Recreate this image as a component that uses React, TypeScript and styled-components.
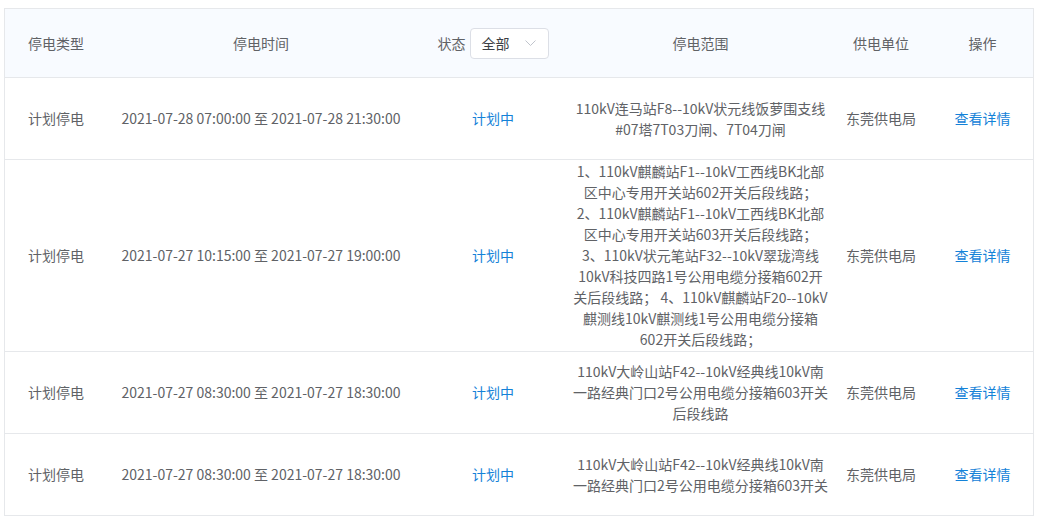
import React from "react";
import styled, { createGlobalStyle } from "styled-components";

const GlobalStyle = createGlobalStyle`
  html, body { margin: 0; padding: 0; background: #fff; }
  body {
    padding: 8px 7px 0 4px;
    font-family: "Noto Sans CJK SC", "Microsoft YaHei", sans-serif;
    font-size: 14px;
    color: #606266;
    overflow: hidden;
  }
`;

const COLS = "102px 308px 156px 259px 102px 101px";

const Table = styled.div`
  width: 1030px;
  border: 1px solid #e6e8eb;
  border-bottom: none;
  box-sizing: border-box;
`;

const HeaderRow = styled.div`
  display: grid;
  grid-template-columns: ${COLS};
  height: 69px;
  background: #f8fbff;
  border-bottom: 1px solid #e6e8eb;
  box-sizing: border-box;
`;

const Row = styled.div`
  display: grid;
  grid-template-columns: ${COLS};
  min-height: 82px;
  border-bottom: 1px solid #e6e8eb;
  box-sizing: border-box;
`;

const Cell = styled.div<{ $blue?: boolean }>`
  display: flex;
  align-items: center;
  justify-content: center;
  text-align: center;
  line-height: 21px;
  padding: 1px 0;
  color: ${(p) => (p.$blue ? "#1482d8" : "#606266")};
  white-space: nowrap;
`;

const RangeCell = styled(Cell)`
  white-space: pre-line;
  word-break: normal;
  padding: 1px 1.5px;
`;

const Link = styled.a`
  color: #1482d8;
  text-decoration: none;
  cursor: pointer;
`;

const StatusHead = styled.div`
  display: flex;
  align-items: center;
  gap: 4px;
`;

const Select = styled.div`
  width: 79px;
  height: 31px;
  box-sizing: border-box;
  border: 1px solid #dcdfe6;
  border-radius: 4px;
  background: #fff;
  display: flex;
  align-items: center;
  justify-content: space-between;
  padding: 0 12px 0 11px;
  color: #3c3f45;
`;

const Chevron = () => (
  <svg width="11" height="7" viewBox="0 0 11 7" fill="none">
    <polyline points="0.5,0.5 5.5,5.5 10.5,0.5" stroke="#c0c4cc" strokeWidth="1" />
  </svg>
);

type Item = {
  type: string;
  time: string;
  status: string;
  range: string;
  unit: string;
};

const data: Item[] = [
  {
    type: "计划停电",
    time: "2021-07-28 07:00:00 至 2021-07-28 21:30:00",
    status: "计划中",
    range: "110kV连马站F8--10kV状元线饭萝围支线#07塔7T03刀闸、7T04刀闸",
    unit: "东莞供电局",
  },
  {
    type: "计划停电",
    time: "2021-07-27 10:15:00 至 2021-07-27 19:00:00",
    status: "计划中",
    range:
      "1、110kV麒麟站F1--10kV工西线BK北部区中心专用开关站602开关后段线路；\n2、110kV麒麟站F1--10kV工西线BK北部区中心专用开关站603开关后段线路；\n3、110kV状元笔站F32--10kV翠珑湾线10kV科技四路1号公用电缆分接箱602开关后段线路； 4、110kV麒麟站F20--10kV麒测线10kV麒测线1号公用电缆分接箱602开关后段线路；",
    unit: "东莞供电局",
  },
  {
    type: "计划停电",
    time: "2021-07-27 08:30:00 至 2021-07-27 18:30:00",
    status: "计划中",
    range: "110kV大岭山站F42--10kV经典线10kV南一路经典门口2号公用电缆分接箱603开关后段线路",
    unit: "东莞供电局",
  },
  {
    type: "计划停电",
    time: "2021-07-27 08:30:00 至 2021-07-27 18:30:00",
    status: "计划中",
    range: "110kV大岭山站F42--10kV经典线10kV南一路经典门口2号公用电缆分接箱603开关",
    unit: "东莞供电局",
  },
];

export default function App() {
  return (
    <>
      <GlobalStyle />
      <Table>
        <HeaderRow>
          <Cell>停电类型</Cell>
          <Cell>停电时间</Cell>
          <Cell>
            <StatusHead>
              <span>状态</span>
              <Select>
                <span>全部</span>
                <Chevron />
              </Select>
            </StatusHead>
          </Cell>
          <Cell>停电范围</Cell>
          <Cell>供电单位</Cell>
          <Cell>操作</Cell>
        </HeaderRow>
        {data.map((d, i) => (
          <Row key={i}>
            <Cell>{d.type}</Cell>
            <Cell>{d.time}</Cell>
            <Cell $blue>{d.status}</Cell>
            <RangeCell>{d.range}</RangeCell>
            <Cell>{d.unit}</Cell>
            <Cell>
              <Link>查看详情</Link>
            </Cell>
          </Row>
        ))}
      </Table>
    </>
  );
}
